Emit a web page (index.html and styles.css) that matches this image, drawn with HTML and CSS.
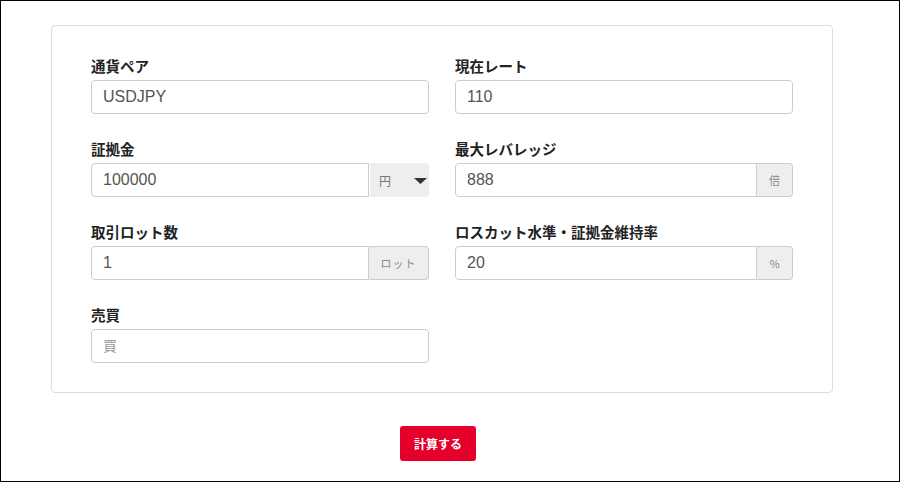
FILE: index.html
```html
<!DOCTYPE html>
<html lang="ja">
<head>
<meta charset="utf-8">
<title>計算</title>
<link rel="stylesheet" href="styles.css">
</head>
<body>
<div class="page">
  <div class="panel">
    <div class="grid">
      <div class="field">
        <label class="label">通貨ペア</label>
        <div class="control"><input class="input" type="text" value="USDJPY"></div>
      </div>
      <div class="field">
        <label class="label">現在レート</label>
        <div class="control"><input class="input" type="text" value="110"></div>
      </div>
      <div class="field">
        <label class="label">証拠金</label>
        <div class="control">
          <input class="input input-left" type="text" value="100000">
          <div class="select">
            <span class="select-text">円</span>
            <svg class="caret" width="13" height="6" viewBox="0 0 13 6"><path d="M0 0h13L6.5 6z" fill="#333"/></svg>
          </div>
        </div>
      </div>
      <div class="field">
        <label class="label">最大レバレッジ</label>
        <div class="control">
          <input class="input input-left" type="text" value="888">
          <span class="addon addon-sm">倍</span>
        </div>
      </div>
      <div class="field">
        <label class="label">取引ロット数</label>
        <div class="control">
          <input class="input input-left" type="text" value="1">
          <span class="addon addon-lg">ロット</span>
        </div>
      </div>
      <div class="field">
        <label class="label">ロスカット水準・証拠金維持率</label>
        <div class="control">
          <input class="input input-left" type="text" value="20">
          <span class="addon addon-sm">%</span>
        </div>
      </div>
      <div class="field">
        <label class="label">売買</label>
        <div class="control"><input class="input" type="text" placeholder="買"></div>
      </div>
    </div>
  </div>
  <div class="actions">
    <button class="btn" type="button">計算する</button>
  </div>
</div>
</body>
</html>
```
FILE: styles.css
```css
* { box-sizing: border-box; }
html, body { margin: 0; padding: 0; background: #fff; }
body {
  font-family: "Liberation Sans", Arial, "Noto Sans CJK JP", sans-serif;
  color: #333;
}
.page {
  width: 900px;
  height: 482px;
  border: 1px solid #000;
  padding: 24px 0 0 50px;
}
.panel {
  width: 782px;
  border: 1px solid #dcdcdc;
  border-radius: 4px;
  padding: 30px 39px 29px 39px;
}
.grid {
  display: grid;
  grid-template-columns: 338px 338px;
  column-gap: 26px;
  row-gap: 25px;
}
.label {
  display: block;
  font-family: "Noto Sans CJK JP", sans-serif;
  font-weight: 700;
  font-size: 14.5px;
  line-height: 20px;
  color: #222;
  margin-bottom: 4px;
}
.control {
  display: flex;
  height: 34px;
}
.input {
  flex: 1;
  min-width: 0;
  height: 34px;
  border: 1px solid #ccc;
  border-radius: 4px;
  padding: 0 11px;
  font-family: "Liberation Sans", Arial, "Noto Sans CJK JP", sans-serif;
  font-size: 16px;
  color: #555;
  background: #fff;
  outline: none;
}
.input::placeholder {
  color: #999;
  font-family: "Noto Sans CJK JP", sans-serif;
  font-size: 14px;
}
.input-left { border-radius: 4px 0 0 4px; }
.select {
  width: 59px;
  margin-left: 1px;
  background: #eee;
  border-radius: 0 4px 4px 0;
  display: flex;
  align-items: center;
  padding: 0 2px 0 9px;
  justify-content: space-between;
}
.select-text {
  font-family: "Noto Sans CJK JP", sans-serif;
  font-size: 12px;
  color: #777;
}
.caret { display: block; margin-top: 1px; }
.addon {
  display: flex;
  align-items: center;
  justify-content: center;
  background: #eee;
  border: 1px solid #ccc;
  border-left: 0;
  border-radius: 0 4px 4px 0;
  font-family: "Noto Sans CJK JP", sans-serif;
  font-size: 11px;
  color: #888;
}
.addon-sm { width: 36px; }
.addon-lg { width: 60px; letter-spacing: 1px; }
.actions {
  width: 782px;
  display: flex;
  justify-content: center;
  padding-right: 8px;
  margin-top: 33px;
}
.btn {
  width: 76px;
  height: 35px;
  border: 0;
  border-radius: 3px;
  background: #e4002b;
  color: #fff;
  font-family: "Noto Sans CJK JP", sans-serif;
  font-weight: 700;
  font-size: 12px;
  padding: 0;
  cursor: pointer;
}
```
